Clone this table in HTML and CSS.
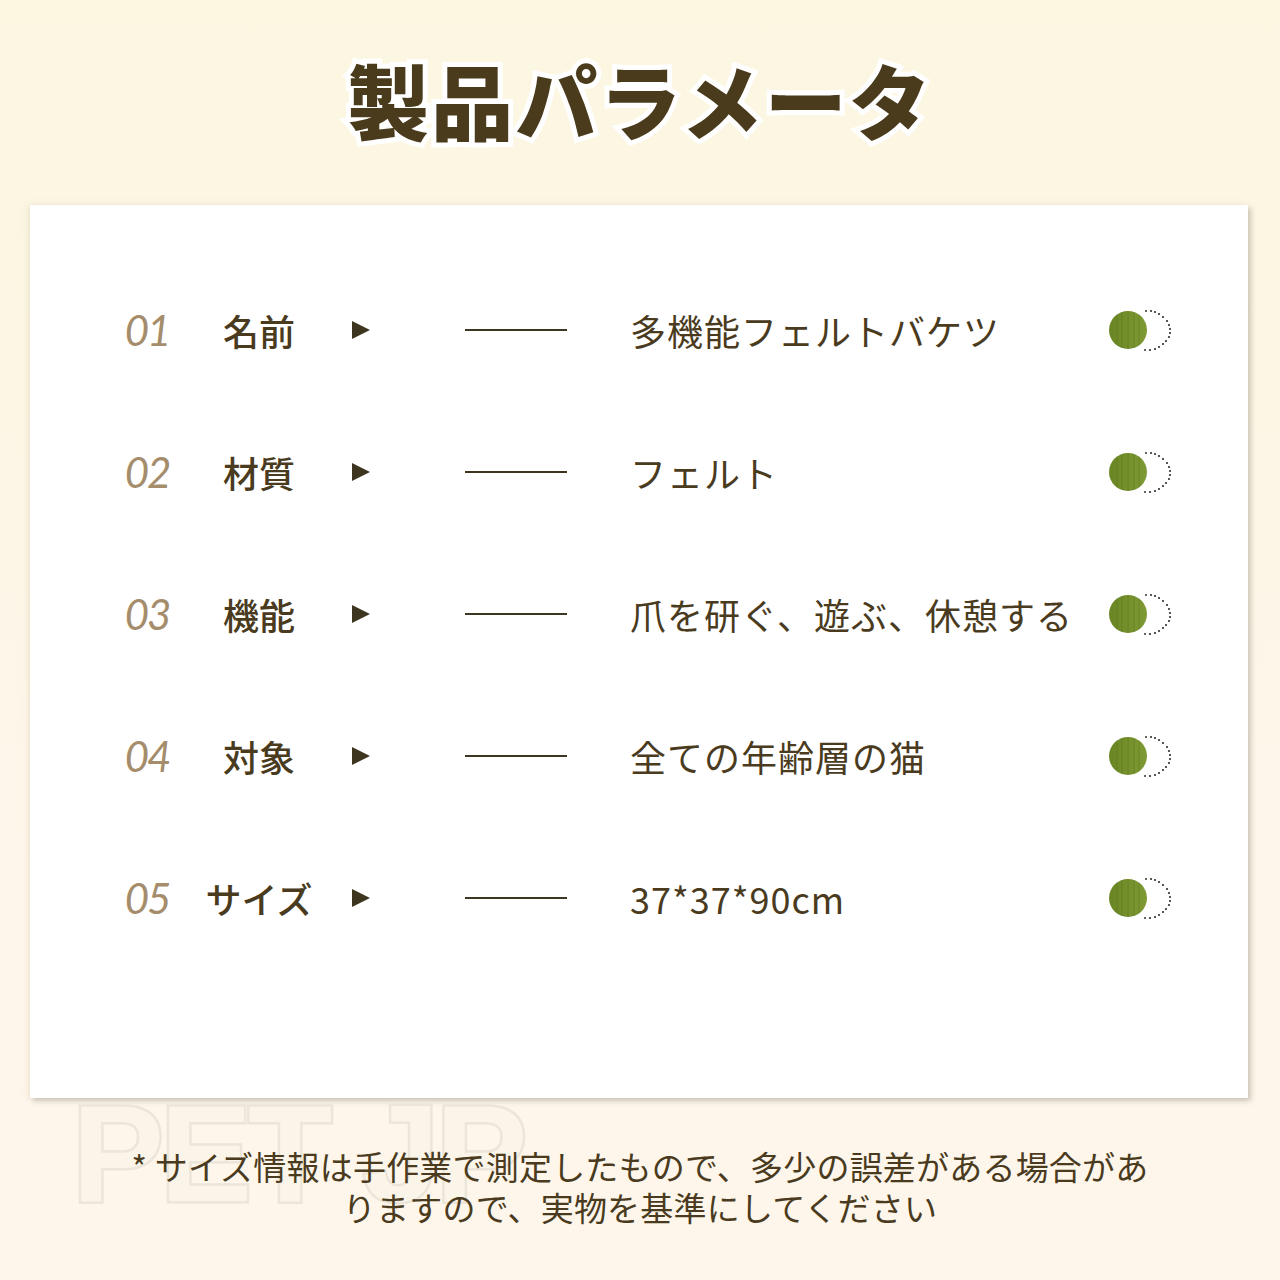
FILE: index.html
```html
<!DOCTYPE html>
<html lang="ja">
<head>
<meta charset="utf-8">
<link rel="stylesheet" href="styles.css">
</head>
<body>
<div class="page">
  <header class="header"><h1 class="title">製品パラメータ</h1></header>
  <section class="card">
    <div class="row">
      <div class="num">01</div><div class="label">名前</div><div class="tri-cell"><span class="tri"></span></div><div class="line-cell"><span class="line"></span></div><div class="value">多機能フェルトバケツ</div>
      <div class="icon"><svg width="72" height="44" viewBox="0 0 72 44"><defs><linearGradient id="g" x1="0" x2="1"><stop offset="0" stop-color="#6a8624"/><stop offset="1" stop-color="#7f9a34"/></linearGradient></defs><circle cx="20" cy="22" r="19" fill="url(#g)"/><g stroke="#5c7420" stroke-width="0.8" opacity=".6"><line x1="9" y1="7" x2="9" y2="37"/><line x1="14" y1="4" x2="14" y2="40"/><line x1="20" y1="3" x2="20" y2="41"/><line x1="26" y1="4" x2="26" y2="40"/><line x1="31" y1="7" x2="31" y2="37"/></g><g fill="#333028"><circle cx="38" cy="3" r="1"/><circle cx="43" cy="3" r="1.1"/><circle cx="47" cy="4" r="1.1"/><circle cx="51" cy="6" r="1.1"/><circle cx="55" cy="9" r="1.1"/><circle cx="59" cy="13" r="1.1"/><circle cx="61" cy="17" r="1.1"/><circle cx="62" cy="21" r="1.1"/><circle cx="62" cy="25" r="1.1"/><circle cx="61" cy="29" r="1.1"/><circle cx="58" cy="33" r="1.1"/><circle cx="55" cy="36" r="1.1"/><circle cx="51" cy="39" r="1.1"/><circle cx="47" cy="41" r="1.1"/><circle cx="42" cy="42" r="1.1"/><circle cx="37" cy="42" r="1"/></g></svg></div>
    </div>
    <div class="row">
      <div class="num">02</div><div class="label">材質</div><div class="tri-cell"><span class="tri"></span></div><div class="line-cell"><span class="line"></span></div><div class="value">フェルト</div>
      <div class="icon"><svg width="72" height="44" viewBox="0 0 72 44"><circle cx="20" cy="22" r="19" fill="url(#g)"/><g stroke="#5c7420" stroke-width="0.8" opacity=".6"><line x1="9" y1="7" x2="9" y2="37"/><line x1="14" y1="4" x2="14" y2="40"/><line x1="20" y1="3" x2="20" y2="41"/><line x1="26" y1="4" x2="26" y2="40"/><line x1="31" y1="7" x2="31" y2="37"/></g><g fill="#333028"><circle cx="38" cy="3" r="1"/><circle cx="43" cy="3" r="1.1"/><circle cx="47" cy="4" r="1.1"/><circle cx="51" cy="6" r="1.1"/><circle cx="55" cy="9" r="1.1"/><circle cx="59" cy="13" r="1.1"/><circle cx="61" cy="17" r="1.1"/><circle cx="62" cy="21" r="1.1"/><circle cx="62" cy="25" r="1.1"/><circle cx="61" cy="29" r="1.1"/><circle cx="58" cy="33" r="1.1"/><circle cx="55" cy="36" r="1.1"/><circle cx="51" cy="39" r="1.1"/><circle cx="47" cy="41" r="1.1"/><circle cx="42" cy="42" r="1.1"/><circle cx="37" cy="42" r="1"/></g></svg></div>
    </div>
    <div class="row">
      <div class="num">03</div><div class="label">機能</div><div class="tri-cell"><span class="tri"></span></div><div class="line-cell"><span class="line"></span></div><div class="value">爪を研ぐ、遊ぶ、休憩する</div>
      <div class="icon"><svg width="72" height="44" viewBox="0 0 72 44"><circle cx="20" cy="22" r="19" fill="url(#g)"/><g stroke="#5c7420" stroke-width="0.8" opacity=".6"><line x1="9" y1="7" x2="9" y2="37"/><line x1="14" y1="4" x2="14" y2="40"/><line x1="20" y1="3" x2="20" y2="41"/><line x1="26" y1="4" x2="26" y2="40"/><line x1="31" y1="7" x2="31" y2="37"/></g><g fill="#333028"><circle cx="38" cy="3" r="1"/><circle cx="43" cy="3" r="1.1"/><circle cx="47" cy="4" r="1.1"/><circle cx="51" cy="6" r="1.1"/><circle cx="55" cy="9" r="1.1"/><circle cx="59" cy="13" r="1.1"/><circle cx="61" cy="17" r="1.1"/><circle cx="62" cy="21" r="1.1"/><circle cx="62" cy="25" r="1.1"/><circle cx="61" cy="29" r="1.1"/><circle cx="58" cy="33" r="1.1"/><circle cx="55" cy="36" r="1.1"/><circle cx="51" cy="39" r="1.1"/><circle cx="47" cy="41" r="1.1"/><circle cx="42" cy="42" r="1.1"/><circle cx="37" cy="42" r="1"/></g></svg></div>
    </div>
    <div class="row">
      <div class="num">04</div><div class="label">対象</div><div class="tri-cell"><span class="tri"></span></div><div class="line-cell"><span class="line"></span></div><div class="value">全ての年齢層の猫</div>
      <div class="icon"><svg width="72" height="44" viewBox="0 0 72 44"><circle cx="20" cy="22" r="19" fill="url(#g)"/><g stroke="#5c7420" stroke-width="0.8" opacity=".6"><line x1="9" y1="7" x2="9" y2="37"/><line x1="14" y1="4" x2="14" y2="40"/><line x1="20" y1="3" x2="20" y2="41"/><line x1="26" y1="4" x2="26" y2="40"/><line x1="31" y1="7" x2="31" y2="37"/></g><g fill="#333028"><circle cx="38" cy="3" r="1"/><circle cx="43" cy="3" r="1.1"/><circle cx="47" cy="4" r="1.1"/><circle cx="51" cy="6" r="1.1"/><circle cx="55" cy="9" r="1.1"/><circle cx="59" cy="13" r="1.1"/><circle cx="61" cy="17" r="1.1"/><circle cx="62" cy="21" r="1.1"/><circle cx="62" cy="25" r="1.1"/><circle cx="61" cy="29" r="1.1"/><circle cx="58" cy="33" r="1.1"/><circle cx="55" cy="36" r="1.1"/><circle cx="51" cy="39" r="1.1"/><circle cx="47" cy="41" r="1.1"/><circle cx="42" cy="42" r="1.1"/><circle cx="37" cy="42" r="1"/></g></svg></div>
    </div>
    <div class="row">
      <div class="num">05</div><div class="label">サイズ</div><div class="tri-cell"><span class="tri"></span></div><div class="line-cell"><span class="line"></span></div><div class="value">37*37*90cm</div>
      <div class="icon"><svg width="72" height="44" viewBox="0 0 72 44"><circle cx="20" cy="22" r="19" fill="url(#g)"/><g stroke="#5c7420" stroke-width="0.8" opacity=".6"><line x1="9" y1="7" x2="9" y2="37"/><line x1="14" y1="4" x2="14" y2="40"/><line x1="20" y1="3" x2="20" y2="41"/><line x1="26" y1="4" x2="26" y2="40"/><line x1="31" y1="7" x2="31" y2="37"/></g><g fill="#333028"><circle cx="38" cy="3" r="1"/><circle cx="43" cy="3" r="1.1"/><circle cx="47" cy="4" r="1.1"/><circle cx="51" cy="6" r="1.1"/><circle cx="55" cy="9" r="1.1"/><circle cx="59" cy="13" r="1.1"/><circle cx="61" cy="17" r="1.1"/><circle cx="62" cy="21" r="1.1"/><circle cx="62" cy="25" r="1.1"/><circle cx="61" cy="29" r="1.1"/><circle cx="58" cy="33" r="1.1"/><circle cx="55" cy="36" r="1.1"/><circle cx="51" cy="39" r="1.1"/><circle cx="47" cy="41" r="1.1"/><circle cx="42" cy="42" r="1.1"/><circle cx="37" cy="42" r="1"/></g></svg></div>
    </div>
  </section>
  <footer class="footer">
    <div class="watermark" aria-hidden="true">PET JP</div>
    <p class="note">* サイズ情報は手作業で測定したもので、多少の誤差がある場合があ<br>りますので、実物を基準にしてください</p>
  </footer>
</div>
</body>
</html>
```

FILE: styles.css
```css
html, body {
  margin: 0;
  padding: 0;
}
body {
  background: #fef6ea;
  font-family: "Noto Sans CJK JP", "Noto Sans", sans-serif;
  color: #4a3b1e;
}
.page {
  width: 1280px;
  height: 1280px;
  overflow: hidden;
  background: linear-gradient(180deg, #fcf7e1 0%, #fcf6e3 20%, #fef6ea 60%, #fef6eb 100%);
}
.header {
  height: 205px;
  display: flex;
  align-items: flex-start;
  justify-content: center;
}
.title {
  margin: 44px 0 0 0;
  font-size: 82px;
  line-height: 110px;
  font-weight: 900;
  letter-spacing: 2px;
  color: #4a3b1c;
  -webkit-text-stroke: 10px #ffffff;
  paint-order: stroke fill;
}
.card {
  margin: 0 32px 0 30px;
  height: 893px;
  box-sizing: border-box;
  background: #ffffff;
  padding: 54px 0 0 80px;
  box-shadow: 3px 3px 5px rgba(120, 120, 110, 0.35), -2px 0 6px rgba(230, 220, 190, 0.5);
}
.row {
  height: 142px;
  display: flex;
  align-items: center;
}
.num {
  width: 74px;
  text-align: center;
  font-family: "Lato", "Liberation Sans", sans-serif;
  font-style: italic;
  font-weight: 400;
  font-size: 42px;
  letter-spacing: -2px;
  color: #a58d6c;
}
.label {
  width: 150px;
  text-align: center;
  font-size: 36px;
  font-weight: 500;
  color: #4a3b1e;
}
.tri-cell {
  width: 106px;
  display: flex;
  padding-left: 18px;
  box-sizing: border-box;
}
.tri {
  width: 0;
  height: 0;
  border-left: 18px solid #3d3520;
  border-top: 9px solid transparent;
  border-bottom: 9px solid transparent;
}
.line-cell {
  width: 190px;
  padding-left: 25px;
  box-sizing: border-box;
  display: flex;
}
.line {
  width: 102px;
  height: 2px;
  background: #3d3520;
}
.value {
  width: 478px;
  font-size: 36px;
  font-weight: 400;
  letter-spacing: 1px;
  color: #4a3b1e;
  white-space: nowrap;
}
.icon {
  width: 72px;
  display: flex;
}
.icon svg {
  display: block;
}
.footer {
  position: relative;
  padding-top: 48px;
}
.watermark {
  position: absolute;
  left: 72px;
  top: -14px;
  font-family: "Liberation Sans", sans-serif;
  font-weight: 700;
  font-size: 138px;
  letter-spacing: -4px;
  color: #fbf4e8;
  -webkit-text-stroke: 5px #ebe5da;
  paint-order: stroke fill;
  line-height: 1;
}
.note {
  position: relative;
  margin: 0;
  text-align: center;
  font-size: 33px;
  line-height: 41px;
  letter-spacing: 0.2px;
  color: #4a3b1e;
}
```
